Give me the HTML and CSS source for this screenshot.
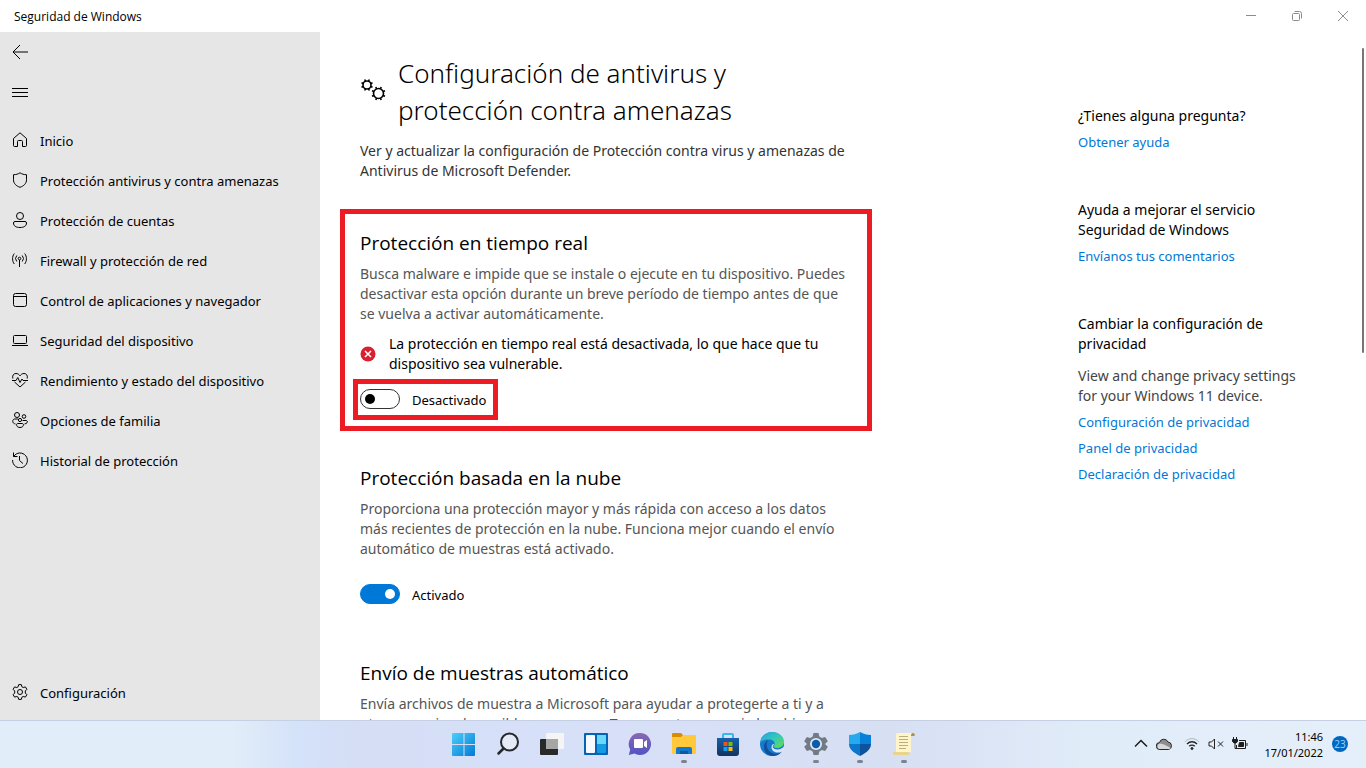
FILE: index.html
```html
<!DOCTYPE html>
<html lang="es">
<head>
    <meta charset="UTF-8">
    <meta name="viewport" content="width=device-width, initial-scale=1.0">
    <title>Seguridad de Windows</title>
    <link rel="stylesheet" href="styles.css">
</head>
<body>
    <div class="screen">
        <header class="titlebar">
            <span class="app-name">Seguridad de Windows</span>
            <div class="window-buttons">
                <button type="button" aria-label="Minimizar"><svg width="12" height="12" viewBox="0 0 12 12"><path d="M1 5.500h10"/></svg></button>
                <button type="button" aria-label="Restaurar"><svg width="12" height="12" viewBox="0 0 12 12"><rect x="1.500" y="3.500" width="7" height="7" rx="1"/><path d="M3.500 1.500h5a2 2 0 0 1 2 2v5"/></svg></button>
                <button type="button" aria-label="Cerrar"><svg width="12" height="12" viewBox="0 0 12 12"><path d="M1 1l10 10M11 1L1 11"/></svg></button>
            </div>
        </header>

        <div class="window-body">
            <aside class="sidebar">
                <button type="button" class="side-button" aria-label="Atrás"><svg class="icon" viewBox="0 0 16 16"><path d="M16 8H1M8 1L1 8l7 7"/></svg></button>
                <button type="button" class="side-button" aria-label="Menú"><svg class="icon" viewBox="0 0 16 16"><path d="M0 4.500h16M0 8.500h16M0 12.500h16"/></svg></button>
                <nav class="nav">
                    <a href="#"><svg class="icon" viewBox="0 0 16 16"><path d="M1.500 6.500L8 .8l6.500 5.700v7a1 1 0 0 1-1 1h-3v-5a1 1 0 0 0-1-1h-3a1 1 0 0 0-1 1v5h-3a1 1 0 0 1-1-1z"/></svg><span>Inicio</span></a>
                    <a href="#"><svg class="icon" viewBox="0 0 16 16"><path d="M8 .8c2 1.300 4 1.900 6.500 1.900v5c0 3.700-2.500 6.200-6.500 7.600-4-1.400-6.500-3.900-6.500-7.600v-5C4 2.700 6 2.100 8 .8z"/></svg><span>Protección antivirus y contra amenazas</span></a>
                    <a href="#"><svg class="icon" viewBox="0 0 16 16"><circle cx="8" cy="4" r="3.500"/><path d="M3 9.500h10a1.500 1.500 0 0 1 1.500 1.500c0 3-2.500 4.500-6.500 4.500S1.500 14 1.500 11A1.500 1.500 0 0 1 3 9.500z"/></svg><span>Protección de cuentas</span></a>
                    <a href="#"><svg class="icon" viewBox="0 0 16 16"><circle cx="7.500" cy="6.500" r="1.300"/><path d="M7.500 8v7M4.800 3.500a4.500 4.500 0 0 0 0 6M10.200 3.500a4.500 4.500 0 0 1 0 6M2.300 1.500C0 4.500 0 9 2.300 12M12.700 1.500C15 4.500 15 9 12.700 12"/></svg><span>Firewall y protección de red</span></a>
                    <a href="#"><svg class="icon" viewBox="0 0 16 16"><rect x="1.500" y="1.500" width="13" height="13" rx="2"/><path d="M1.500 4.500h13"/></svg><span>Control de aplicaciones y navegador</span></a>
                    <a href="#"><svg class="icon" viewBox="0 0 16 16"><rect x="1.500" y="3.500" width="13" height="8" rx="1"/><path d="M0 13.500h16"/></svg><span>Seguridad del dispositivo</span></a>
                    <a href="#"><svg class="icon" viewBox="0 0 16 16"><path d="M.8 6.500C0 3 2 1.500 4 1.500c2 0 3 1 4 2.300 1-1.300 2-2.300 4-2.300s4 1.500 3.200 5M0 8.500h4l1.800-3L8 10.500l2-3.500 1 1.500h5M2.500 10L8 15l5.500-5"/></svg><span>Rendimiento y estado del dispositivo</span></a>
                    <a href="#"><svg class="icon" viewBox="0 0 16 16"><circle cx="5" cy="3" r="2.500"/><circle cx="12" cy="4.500" r="1.800"/><circle cx="8" cy="8" r="1.600"/><path d="M6 7H2.500C0 7.500 0 11.500 3.500 12M10.500 8.500h4c1.500.5 1.300 3-2 3.500M5.500 11.500h5c1.500 0 1.500 4-2.500 4s-4-4-2.500-4z"/></svg><span>Opciones de familia</span></a>
                    <a href="#"><svg class="icon" viewBox="0 0 16 16"><path d="M1.500.5v4h4M1.700 4.500A7.400 7.400 0 1 1 .6 8M7.500 4v4.500l3.500 3"/></svg><span>Historial de protección</span></a>
                </nav>
                <nav class="nav nav-bottom">
                    <a href="#"><svg class="icon" viewBox="0 0 16 16"><path d="M6.700.6h2.600l.6 2.200 1.300.7 2.200-.6 1.500 2.400L13.300 7v2l1.600 1.700-1.500 2.400-2.200-.6-1.300.7-.6 2.200H6.700l-.6-2.200-1.300-.7-2.200.6-1.500-2.400L2.700 9V7L1.100 5.300l1.500-2.400 2.200.6 1.300-.7z"/><circle cx="8" cy="8" r="2.500"/></svg><span>Configuración</span></a>
                </nav>
            </aside>

            <main class="content">
                <div class="settings">
                    <div class="page-title">
                        <svg class="gears" width="28" height="28" viewBox="0 0 28 28">
                            <circle cx="7" cy="7" r="4"/>
                            <path d="M10.700 8.500l1.800.8M8.500 10.700l.8 1.800M5.500 10.700l-.8 1.800M3.300 8.500l-1.800.8M3.300 5.500l-1.800-.8M5.500 3.300l-.8-1.800M8.500 3.300l.8-1.800M10.700 5.500l1.800-.8"/>
                            <circle cx="18.500" cy="15.500" r="5"/>
                            <path d="M23.100 17.400l1.900.8M20.400 20.100l.8 1.900M16.600 20.100l-.8 1.900M13.900 17.400l-1.900.8M13.900 13.600l-1.900-.8M16.600 10.900l-.8-1.900M20.400 10.900l.8-1.900M23.100 13.600l1.900-.8"/>
                        </svg>
                        <h1>Configuración de antivirus y<br>protección contra amenazas</h1>
                    </div>
                    <p class="intro">Ver y actualizar la configuración de Protección contra virus y amenazas de<br>Antivirus de Microsoft Defender.</p>

                    <section class="setting highlighted">
                        <h2>Protección en tiempo real</h2>
                        <p>Busca malware e impide que se instale o ejecute en tu dispositivo. Puedes<br>desactivar esta opción durante un breve período de tiempo antes de que<br>se vuelva a activar automáticamente.</p>
                        <div class="warning">
                            <svg width="16" height="16" viewBox="0 0 16 16"><circle cx="8" cy="8" r="7.500" fill="#d9202e"/><path d="M5 5l6 6M11 5l-6 6" stroke="#fff" stroke-width="1.500"/></svg>
                            <span>La protección en tiempo real está desactivada, lo que hace que tu<br>dispositivo sea vulnerable.</span>
                        </div>
                        <label class="switch switch-marked"><input type="checkbox"><span>Desactivado</span></label>
                    </section>

                    <section class="setting">
                        <h2>Protección basada en la nube</h2>
                        <p>Proporciona una protección mayor y más rápida con acceso a los datos<br>más recientes de protección en la nube. Funciona mejor cuando el envío<br>automático de muestras está activado.</p>
                        <label class="switch"><input type="checkbox" checked><span>Activado</span></label>
                    </section>

                    <section class="setting">
                        <h2>Envío de muestras automático</h2>
                        <p>Envía archivos de muestra a Microsoft para ayudar a protegerte a ti y a<br>otros usuarios de posibles amenazas. Te preguntaremos si el archivo</p>
                    </section>
                </div>

                <aside class="help">
                    <section>
                        <h3>¿Tienes alguna pregunta?</h3>
                        <a href="#">Obtener ayuda</a>
                    </section>
                    <section>
                        <h3>Ayuda a mejorar el servicio<br>Seguridad de Windows</h3>
                        <a href="#">Envíanos tus comentarios</a>
                    </section>
                    <section>
                        <h3>Cambiar la configuración de<br>privacidad</h3>
                        <p>View and change privacy settings<br>for your Windows 11 device.</p>
                        <a href="#">Configuración de privacidad</a>
                        <a href="#">Panel de privacidad</a>
                        <a href="#">Declaración de privacidad</a>
                    </section>
                </aside>
                <div class="scroll-thumb"></div>
            </main>
        </div>

        <footer class="taskbar">
            <div class="apps">
                <button type="button" aria-label="Inicio">
                    <svg width="24" height="24" viewBox="0 0 24 24">
                        <defs><linearGradient id="win" x1="0" y1="0" x2="24" y2="24" gradientUnits="userSpaceOnUse"><stop offset="0" stop-color="#4fd0fa"/><stop offset="1" stop-color="#0078d4"/></linearGradient></defs>
                        <path fill="url(#win)" d="M1 1h10.500v11H0V2a1 1 0 0 1 1-1zM12.500 1H22a1 1 0 0 1 1 1v10H12.500zM0 13h11.500v11H1a1 1 0 0 1-1-1zM12.500 13H23v10a1 1 0 0 1-1 1h-9.500z"/>
                    </svg>
                </button>
                <button type="button" aria-label="Buscar">
                    <svg width="24" height="24" viewBox="0 0 24 24" fill="none" stroke="#26282c"><circle cx="13.500" cy="10" r="8.500" fill="#e4ebf7" stroke-width="2"/><path d="M7.500 16.500l-5 5" stroke-width="2.500" stroke-linecap="round"/></svg>
                </button>
                <button type="button" aria-label="Vista de tareas">
                    <svg width="24" height="24" viewBox="0 0 24 24"><rect x="0" y="7" width="18" height="16" rx="1" fill="#292929"/><rect x="6" y="1" width="18" height="16" rx="1" fill="#f5f5f5"/><path fill="#a6a6a6" d="M6 7h12v10H6z"/></svg>
                </button>
                <button type="button" aria-label="Widgets">
                    <svg width="24" height="24" viewBox="0 0 24 24"><rect y="1" width="24" height="22" rx="1" fill="#0563b5"/><rect x="2" y="3" width="9" height="18" rx="1" fill="#f7f9fc"/><rect x="13" y="3" width="9" height="18" rx="1" fill="#159be4"/><path fill="#69d8ff" d="M13 3h9v9h-9z"/></svg>
                </button>
                <button type="button" aria-label="Chat">
                    <svg width="24" height="24" viewBox="0 0 24 24">
                        <defs><linearGradient id="chat" x1="0" y1="0" x2="0" y2="1"><stop offset="0" stop-color="#8b68b2"/><stop offset="1" stop-color="#5154c4"/></linearGradient></defs>
                        <path fill="url(#chat)" d="M12 1a11 11 0 1 1-5.500 20.500L.8 23l1.400-5.500A11 11 0 0 1 12 1z"/><rect x="6" y="7" width="9" height="9" rx="1" fill="#fff"/><path fill="#fff" d="M16 10l3-2v8l-3-2z"/>
                    </svg>
                </button>
                <button type="button" class="running" aria-label="Explorador de archivos">
                    <svg width="24" height="24" viewBox="0 0 24 24"><path fill="#d98d04" d="M1 1h8l2 2v6H0V2a1 1 0 0 1 1-1z"/><path fill="#ffc93b" d="M0 5h9l2-2h12a1 1 0 0 1 1 1v17a1 1 0 0 1-1 1H1a1 1 0 0 1-1-1z"/><path fill="#1278ce" d="M4 22v-5a2 2 0 0 1 2-2h12a2 2 0 0 1 2 2v5z"/><path fill="#075aa4" d="M8 19h8v3H8z"/></svg>
                </button>
                <button type="button" aria-label="Microsoft Store">
                    <svg width="24" height="24" viewBox="0 0 24 24">
                        <defs><linearGradient id="store" x1="0" y1="0" x2="0" y2="1"><stop offset="0" stop-color="#1660ae"/><stop offset="1" stop-color="#12345f"/></linearGradient></defs>
                        <path d="M7 6V3a1 1 0 0 1 1-1h8a1 1 0 0 1 1 1v3" fill="none" stroke="#36b7ed" stroke-width="2"/><path fill="url(#store)" d="M1 6h22v15a3 3 0 0 1-3 3H4a3 3 0 0 1-3-3z"/><path fill="#f15223" d="M7.500 10h4v4h-4z"/><path fill="#80bd01" d="M12.500 10h4v4h-4z"/><path fill="#08a4ef" d="M7.500 15h4v4h-4z"/><path fill="#ffba08" d="M12.500 15h4v4h-4z"/>
                    </svg>
                </button>
                <button type="button" aria-label="Microsoft Edge">
                    <svg width="24" height="24" viewBox="0 0 24 24">
                        <defs><linearGradient id="edge" x1="0" y1="0" x2="1" y2="1"><stop offset="0" stop-color="#23a0dd"/><stop offset=".5" stop-color="#34c9ba"/><stop offset="1" stop-color="#68dd45"/></linearGradient></defs>
                        <circle cx="12" cy="12" r="12" fill="#1779cb"/><path fill="url(#edge)" d="M0 11.500C1 4 6 0 12 0c7 0 12 4.500 12 9.500 0 4-3 6.500-7 6.500-3 0-4-1-3-2.500 1.500-2 .5-5.500-4-6C5 7 1.500 8.500 0 11.500z"/><path fill="#114f99" d="M8 8c-3 5-1 12 6 13.500 4 .8 7-1 8.500-3C20 23 16 24 12 24 6 23.500 2.500 17 4.500 12 5.300 10 6.500 9 8 8z"/><path fill="#dce5f6" d="M13.500 13c-2 2.500.5 4.500 4 4.500 2.500 0 4.500-1 6-2.500l1.500 1-1 3-2 .5c-1.500 1-3 1-4.500 1-5 0-7.500-5-5-8 1.500-1 2-.5 1 .5z"/>
                    </svg>
                </button>
                <button type="button" class="running" aria-label="Configuración">
                    <svg width="24" height="24" viewBox="0 0 24 24"><path fill="#727b83" d="M9.500 1h5l.8 3.500 2.500 1.400 3.400-1 2.600 4.300L21 12l2.800 2.800-2.600 4.300-3.400-1-2.500 1.400-.8 3.500h-5l-.8-3.500-2.500-1.400-3.400 1L.2 14.800 3 12 .2 9.200l2.600-4.300 3.400 1 2.500-1.400z"/><circle cx="12" cy="12" r="6" fill="#dce8f7"/><circle cx="12" cy="12" r="4.200" fill="#0c5cab"/></svg>
                </button>
                <button type="button" class="running" aria-label="Seguridad de Windows">
                    <svg width="24" height="24" viewBox="0 0 24 24"><path fill="#27a9ed" d="M12 0C8.500 2 5 3 1 3v9h11z"/><path fill="#0880d9" d="M12 0c3.500 2 7 3 11 3v9H12z"/><path fill="#0a76cc" d="M1 12h11v12C5 20.500 1 17 1 12z"/><path fill="#0d529d" d="M23 12H12v12c7-3.500 11-7 11-12z"/></svg>
                </button>
                <button type="button" class="running" aria-label="Bloc de script">
                    <svg width="24" height="24" viewBox="0 0 24 24"><path fill="#af9346" d="M18 1h3a2 2 0 0 1 1.500 3H19z"/><path fill="#fff4ca" d="M5 1h15a3 3 0 0 0-1 2v17H4V3a3 3 0 0 1 1-2z"/><path fill="#e9d48d" d="M1 20h15.500a2 2 0 0 0 2 2l-1.500 1H3a2 2 0 0 1-2-3z"/><path stroke="#bcae79" fill="none" d="M7 4.500h9M7 7.500h9M7 10.500h9M7 13.500h9M7 16.500h7"/></svg>
                </button>
            </div>
            <div class="tray">
                <svg width="14" height="14" viewBox="0 0 14 14"><path d="M1 9.500l6-6 6 6" fill="none" stroke="#1d1d1d" stroke-width="1.500"/></svg>
                <svg class="cloud" width="16" height="14" viewBox="0 0 16 14"><path d="M4 12.500a3.500 3.500 0 0 1-.5-7A4.500 4.500 0 0 1 12 5a3.800 3.800 0 0 1 .5 7.500z" fill="#8d8d8d" stroke="#282828"/><path d="M3 12a3 3 0 0 1 1-5.500l4 1L15 11l-2 1z" fill="#d9d9d9"/></svg>
                <svg width="16" height="16" viewBox="0 0 16 16" fill="none" stroke="#242424"><path d="M.8 6c4-4.500 10.400-4.500 14.400 0" stroke="#b1b7bd"/><path d="M3 8c3-3 7-3 10 0M5.300 10.300c1.500-1.600 3.900-1.600 5.400 0" stroke-width="1.300"/><circle cx="8" cy="12.500" r="1" fill="#242424"/></svg>
                <svg width="16" height="14" viewBox="0 0 16 14" fill="none" stroke="#242424"><path d="M1 5h2.500l3-3v10l-3-3H1zM10 4.500l5 5M15 4.500l-5 5"/></svg>
                <svg width="16" height="14" viewBox="0 0 16 14" fill="none" stroke="#1d1d1d"><path d="M7 3.500h6.500v8h-9V8"/><path d="M7.500 5.500h4v4h-5z" fill="#1d1d1d"/><path d="M15 6v3M1.500 0v2M4.500 0v2"/><path d="M.5 2.500h5v2L4 6H2L.5 4.500z" fill="#1d1d1d"/><path d="M3 6v5.500h2"/></svg>
                <div class="clock"><span>11:46</span><span>17/01/2022</span></div>
                <span class="badge">23</span>
            </div>
        </footer>
    </div>
</body>
</html>
```

FILE: styles.css
```css
* {
    box-sizing: border-box;
}
body {
    margin: 0;
    font-family: "Segoe UI", "Noto Sans", "Open Sans", sans-serif;
    font-size: 14px;
    line-height: 20px;
    color: #000;
    background: #fff;
}
h1, h2, h3, p {
    margin: 0;
    font-weight: 400;
}
button {
    border: none;
    padding: 0;
    background: none;
    font: inherit;
}
a {
    text-decoration: none;
}
.screen {
    display: flex;
    flex-direction: column;
    height: 100vh;
}

/* barra de título */
.titlebar {
    display: flex;
    justify-content: space-between;
    height: 32px;
    padding-left: 14px;
}
.app-name {
    font-family: "Segoe UI", "Open Sans", sans-serif;
    font-size: 12px;
    line-height: 34px;
}
.window-buttons {
    display: flex;
}
.window-buttons button {
    display: flex;
    align-items: center;
    justify-content: center;
    width: 46px;
}
.window-buttons svg {
    fill: none;
    stroke: #8c8c8c;
}
.window-body {
    display: flex;
    flex: 1;
    min-height: 0;
}

/* menú lateral */
.sidebar {
    display: flex;
    flex-direction: column;
    width: 320px;
    flex-shrink: 0;
    background: #e6e6e6;
}
.side-button {
    display: flex;
    align-items: center;
    height: 40px;
    padding-left: 12px;
}
.icon {
    width: 16px;
    height: 16px;
    fill: none;
    stroke: #000;
}
.nav {
    margin-top: 8px;
    font-size: 13px;
}
.nav a {
    display: flex;
    align-items: center;
    gap: 12px;
    height: 40px;
    padding-left: 12px;
    color: #000;
}
.nav span, .switch span {
    padding-top: 2px;
}
.nav-bottom {
    margin-top: auto;
    margin-bottom: 8px;
}

/* contenido */
.content {
    position: relative;
    display: flex;
    justify-content: space-between;
    flex: 1;
    overflow: hidden;
}
.settings {
    padding: 23px 0 0 20px;
}
.page-title {
    display: flex;
    align-items: center;
    gap: 10px;
    padding-left: 20px;
}
.gears {
    fill: none;
    stroke: #000;
    stroke-width: 1.6;
}
h1 {
    font-size: 26px;
    font-weight: 300;
    line-height: 37px;
}
.intro {
    padding: 12px 20px 28px;
    color: #333;
}
.setting {
    padding: 0 20px;
    margin-bottom: 55px;
}
.setting h2 {
    font-family: "Segoe UI", "Open Sans", sans-serif;
    font-size: 19px;
    line-height: 28px;
    margin-bottom: 7px;
}
.setting p {
    color: #555;
}
.highlighted {
    width: 532px;
    padding: 15px 8px 6px;
    margin-bottom: 33px;
    border: 5px solid #ed1c24;
}
.highlighted h2, .highlighted p {
    padding: 0 7px;
}
.warning {
    display: flex;
    align-items: center;
    gap: 13px;
    margin: 10px 0 5px;
    padding-left: 7px;
}
.switch {
    display: flex;
    align-items: center;
    gap: 12px;
    height: 20px;
    margin-top: 25px;
    font-size: 13px;
}
.switch-marked {
    width: max-content;
    height: 41px;
    margin-top: 0;
    padding: 0 7px 1px 2px;
    border: 5px solid #ed1c24;
}
.switch input {
    display: flex;
    align-items: center;
    appearance: none;
    width: 40px;
    height: 20px;
    margin: 0;
    padding: 0 4px;
    border: 1px solid #333;
    border-radius: 10px;
}
.switch input::before {
    content: "";
    width: 10px;
    height: 10px;
    border-radius: 50%;
    background: #000;
}
.switch input:checked {
    justify-content: flex-end;
    border-color: #0078d7;
    background: #0078d7;
}
.switch input:checked::before {
    background: #fff;
}

/* columna de ayuda */
.help {
    display: flex;
    flex-direction: column;
    gap: 48px;
    width: 288px;
    padding-top: 74px;
}
.help section {
    display: flex;
    flex-direction: column;
    gap: 6px;
}
.help h3 {
    font-size: 14px;
}
.help p {
    margin-top: 6px;
    color: #444;
}
.help a {
    font-size: 13px;
    color: #0078d7;
}
.scroll-thumb {
    position: absolute;
    top: 16px;
    right: 2px;
    width: 2px;
    height: 305px;
    border-radius: 1px;
    background: #767676;
}

/* barra de tareas */
.taskbar {
    display: grid;
    grid-template-columns: 1fr auto 1fr;
    height: 48px;
    box-shadow: inset 0 1px #c5d0e5;
    background: linear-gradient(90deg, #e1edf8 0%, #e1edf8 17%, #d4e2fa 22%, #d5def5 26%, #d6e0f8 40%, #d7dff3 65%, #e1ecf9 80%, #e4effa 100%);
}
.apps {
    grid-column: 2;
    display: flex;
    padding-left: 2px;
}
.apps button {
    position: relative;
    display: flex;
    align-items: center;
    justify-content: center;
    width: 44px;
}
.running::after {
    content: "";
    position: absolute;
    bottom: 5px;
    left: 19px;
    width: 6px;
    height: 3px;
    border-radius: 2px;
    background: #7c838e;
}
.tray {
    display: flex;
    align-items: center;
    justify-content: flex-end;
    gap: 8px;
    padding-right: 18px;
}
.cloud {
    margin-right: 4px;
}
.clock {
    display: flex;
    flex-direction: column;
    align-items: flex-end;
    margin: 2px 1px 0 8px;
    font-size: 11px;
    line-height: 16px;
}
.badge {
    width: 16px;
    height: 16px;
    border-radius: 50%;
    background: #0067c0;
    color: #8fd0ff;
    font-size: 10px;
    line-height: 16px;
    text-align: center;
}
```
